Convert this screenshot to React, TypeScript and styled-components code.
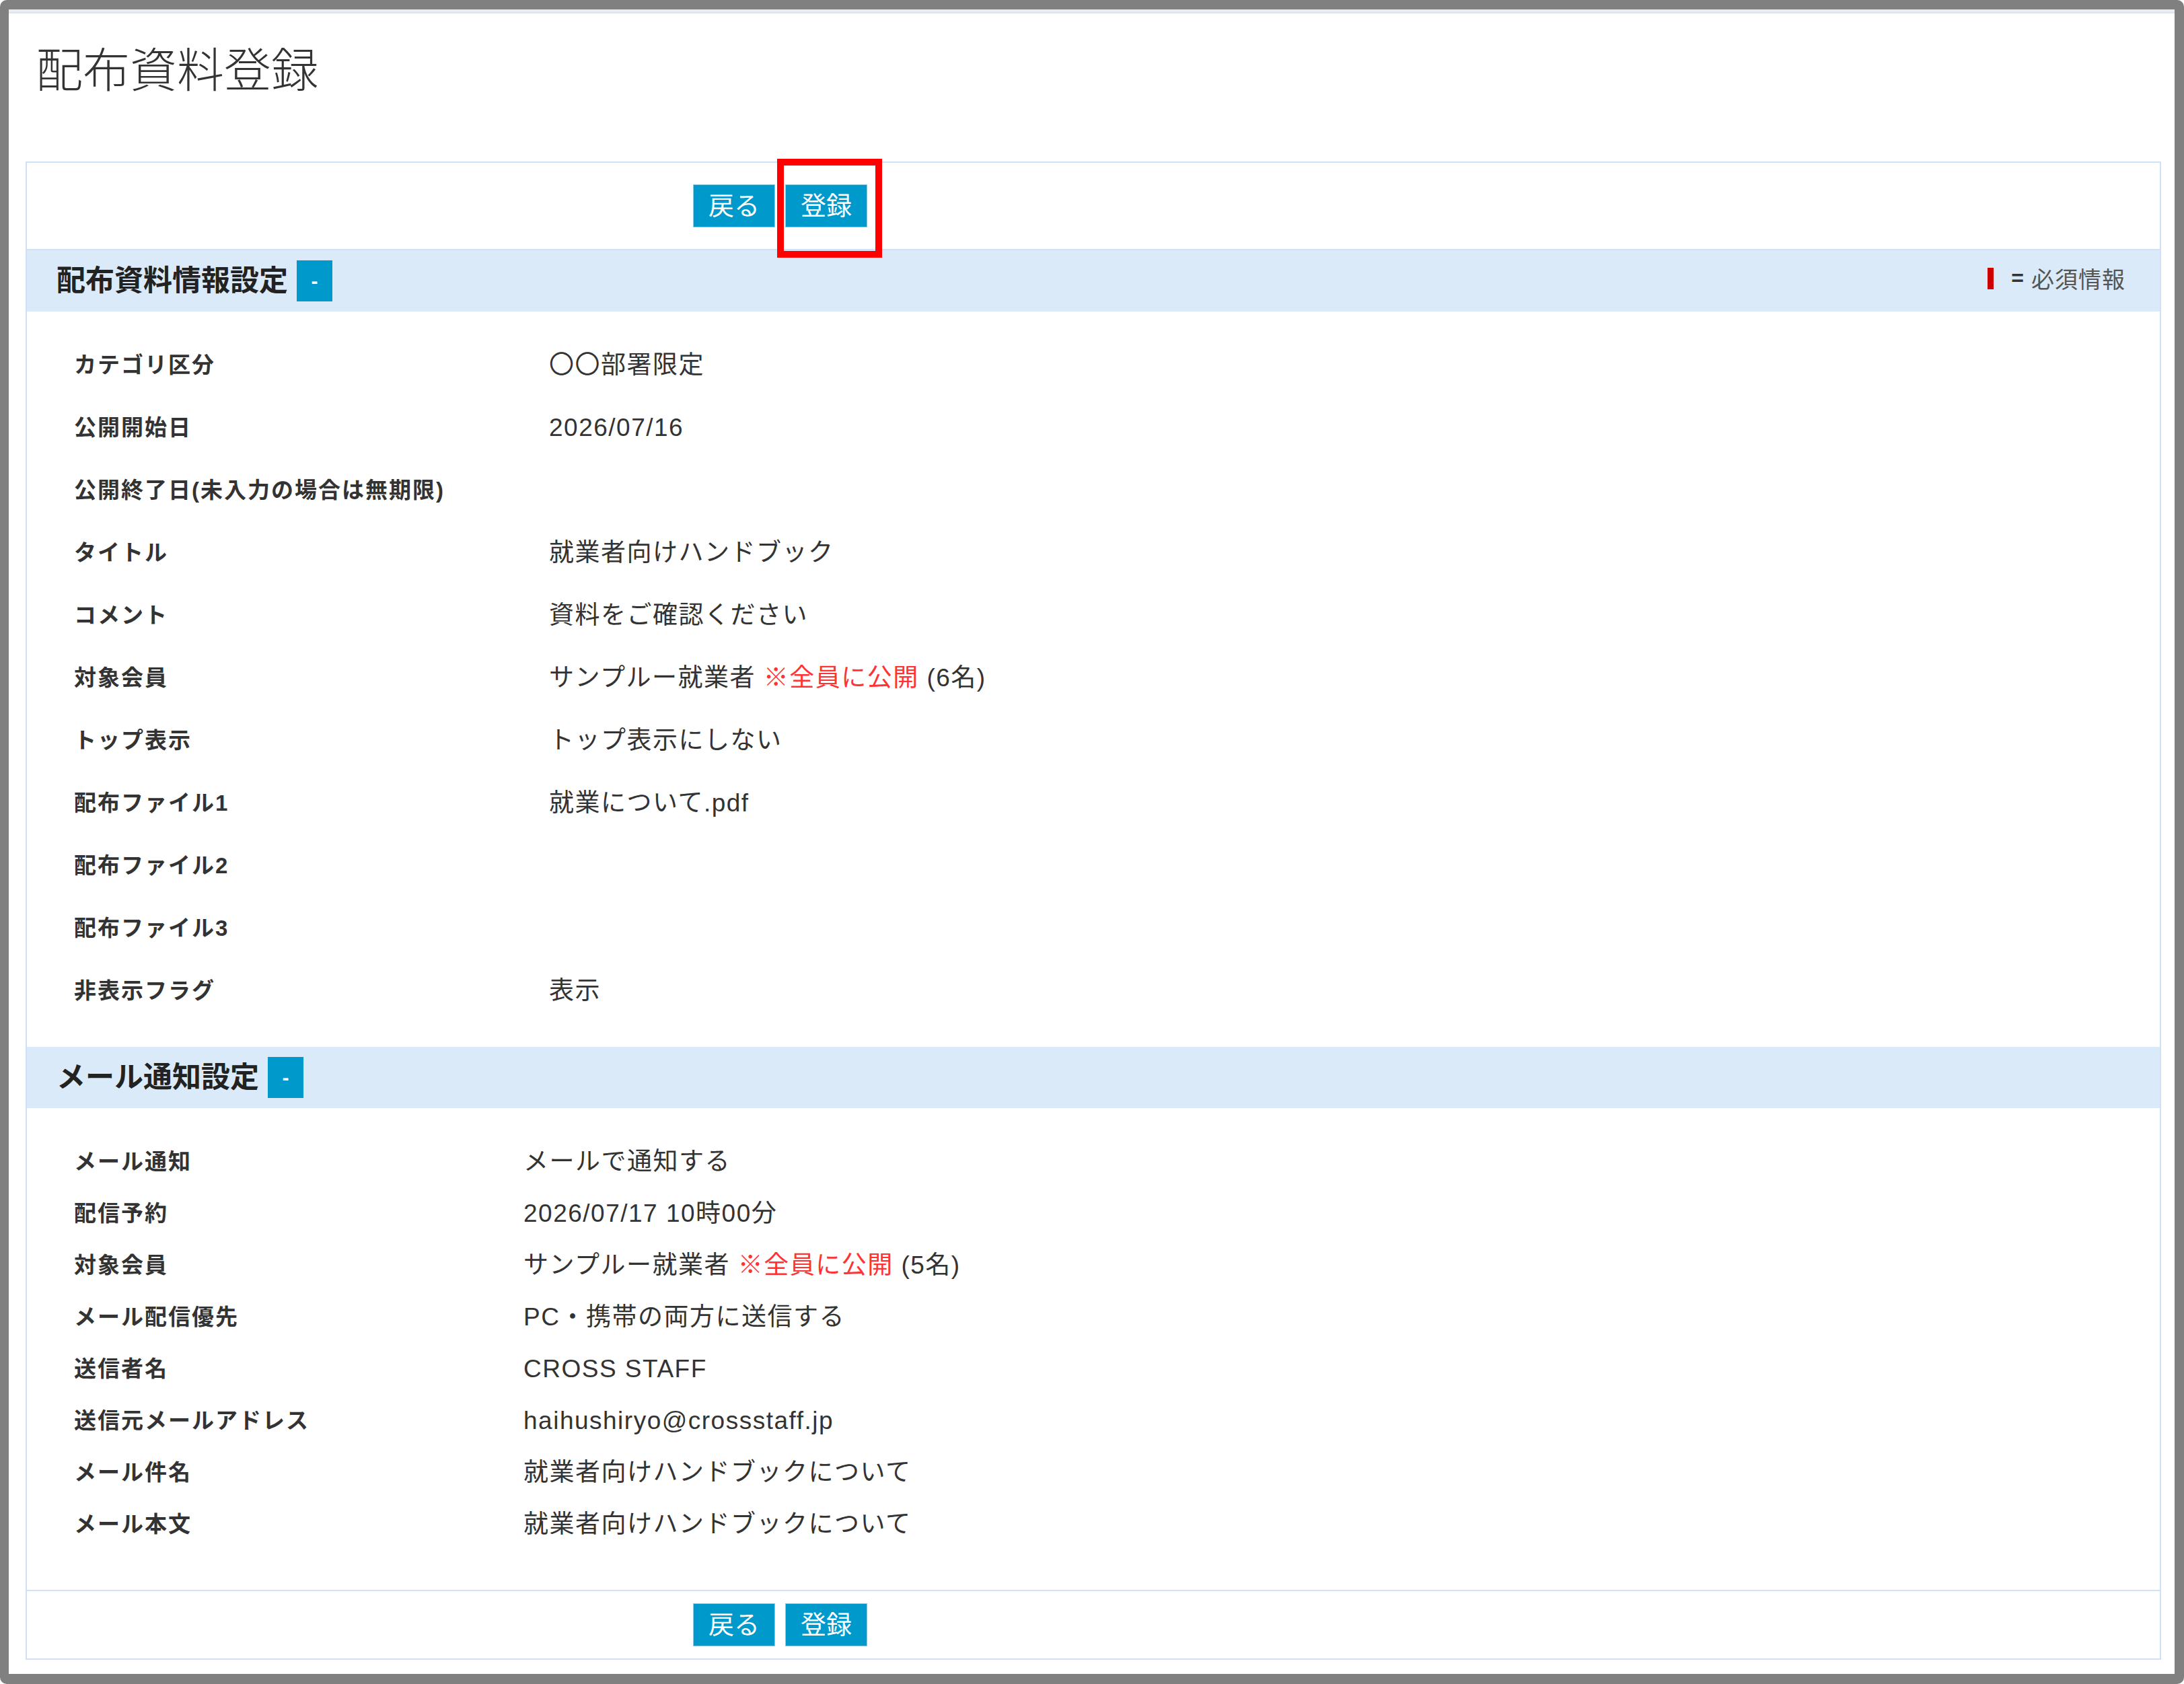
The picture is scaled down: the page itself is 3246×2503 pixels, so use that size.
import React from 'react'
import styled, { createGlobalStyle } from 'styled-components'

const GlobalStyle = createGlobalStyle`
  html, body {
    margin: 0;
    padding: 0;
    background: #ffffff;
  }
  body {
    font-family: "Liberation Sans", "Noto Sans CJK JP", sans-serif;
    color: #333333;
  }
`

const Frame = styled.div`
  box-sizing: border-box;
  width: 3246px;
  height: 2503px;
  border-style: solid;
  border-color: #808080;
  border-width: 14px 14px 15px 13px;
  border-radius: 10px;
  background: #ffffff;
  display: flex;
  flex-direction: column;
`

const TopStrip = styled.div`
  height: 4px;
  background: #ececec;
  border-bottom: 2px solid #d6e6f7;
`

const PageTitle = styled.h1`
  margin: 44px 0 0 40px;
  font-size: 70px;
  line-height: 84px;
  font-weight: 300;
  color: #333333;
`

const Panel = styled.div`
  margin: 92px 20px 0 25px;
  border: 2px solid #cfe1f6;
  display: flex;
  flex-direction: column;
`

const ButtonBar = styled.div<{ $bottom?: boolean }>`
  display: flex;
  gap: 15px;
  padding: ${({ $bottom }) => ($bottom ? '18px 0 18px 990px' : '32px 0 32px 990px')};
  border-bottom: ${({ $bottom }) => ($bottom ? 'none' : '2px solid #cfe1f6')};
  border-top: ${({ $bottom }) => ($bottom ? '2px solid #cfe1f6' : 'none')};
`

const Button = styled.button`
  box-sizing: border-box;
  width: 122px;
  height: 64px;
  padding: 0;
  background: #0099cc;
  color: #ffffff;
  border: 1px solid #8fcbe6;
  font-family: inherit;
  font-size: 38px;
  line-height: 1;
  cursor: pointer;
`

const Highlighted = styled.span`
  position: relative;
  display: inline-flex;
`

const HighlightBox = styled.span`
  position: absolute;
  top: -38px;
  left: -12px;
  right: -22px;
  bottom: -45px;
  border: 10px solid #ff0000;
  pointer-events: none;
`

const SectionHeader = styled.div`
  display: flex;
  align-items: center;
  justify-content: space-between;
  height: 91px;
  padding: 0 51px 0 44px;
  background: #dbeaf8;
`

const HeaderLeft = styled.div`
  display: flex;
  align-items: center;
`

const SectionTitle = styled.h2`
  margin: 0;
  font-size: 43px;
  line-height: 1;
  font-weight: 700;
  color: #222222;
`

const Toggle = styled.button`
  width: 53px;
  height: 61px;
  margin-left: 13px;
  padding: 0;
  background: #0099cc;
  color: #ffffff;
  border: none;
  font-family: inherit;
  font-size: 30px;
  font-weight: 700;
  line-height: 1;
  cursor: pointer;
`

const Required = styled.div`
  display: flex;
  align-items: center;
  margin-bottom: 8px;
  color: #555555;
  font-size: 34px;
  letter-spacing: 1px;
`

const RequiredMark = styled.span`
  width: 9px;
  height: 32px;
  background: #cc0000;
`

const Equals = styled.span`
  margin: 0 10px 0 26px;
  font-weight: 700;
  color: #333333;
  font-size: 32px;
`

const SectionBody = styled.div<{ $compact?: boolean }>`
  padding: ${({ $compact }) => ($compact ? '41px 0 59px 70px' : '33px 0 37px 70px')};
`

const Row = styled.div<{ $labelWidth: number; $compact?: boolean }>`
  display: grid;
  grid-template-columns: ${({ $labelWidth }) => $labelWidth}px 1fr;
  padding: ${({ $compact }) => ($compact ? '13px 0' : '21px 0')};
  line-height: 51px;
`

const Label = styled.div`
  font-size: 33px;
  letter-spacing: 2px;
  font-weight: 700;
  color: #333333;
`

const Value = styled.div`
  font-size: 37px;
  letter-spacing: 1.5px;
  color: #333333;
`

const Notice = styled.span`
  color: #ff3333;
`

type Field = { label: string; value: React.ReactNode }

const target = (count: number) => (
  <>
    サンプルー就業者 <Notice>※全員に公開</Notice> ({count}名)
  </>
)

const materialFields: Field[] = [
  { label: 'カテゴリ区分', value: '〇〇部署限定' },
  { label: '公開開始日', value: '2026/07/16' },
  { label: '公開終了日(未入力の場合は無期限)', value: '' },
  { label: 'タイトル', value: '就業者向けハンドブック' },
  { label: 'コメント', value: '資料をご確認ください' },
  { label: '対象会員', value: target(6) },
  { label: 'トップ表示', value: 'トップ表示にしない' },
  { label: '配布ファイル1', value: '就業について.pdf' },
  { label: '配布ファイル2', value: '' },
  { label: '配布ファイル3', value: '' },
  { label: '非表示フラグ', value: '表示' },
]

const mailFields: Field[] = [
  { label: 'メール通知', value: 'メールで通知する' },
  { label: '配信予約', value: '2026/07/17 10時00分' },
  { label: '対象会員', value: target(5) },
  { label: 'メール配信優先', value: 'PC・携帯の両方に送信する' },
  { label: '送信者名', value: 'CROSS STAFF' },
  { label: '送信元メールアドレス', value: 'haihushiryo@crossstaff.jp' },
  { label: 'メール件名', value: '就業者向けハンドブックについて' },
  { label: 'メール本文', value: '就業者向けハンドブックについて' },
]

function Actions({ bottom, highlight }: { bottom?: boolean; highlight?: boolean }) {
  return (
    <ButtonBar $bottom={bottom}>
      <Button>戻る</Button>
      {highlight ? (
        <Highlighted>
          <Button>登録</Button>
          <HighlightBox />
        </Highlighted>
      ) : (
        <Button>登録</Button>
      )}
    </ButtonBar>
  )
}

export default function App() {
  return (
    <>
      <GlobalStyle />
      <Frame>
        <TopStrip />
        <PageTitle>配布資料登録</PageTitle>
        <Panel>
          <Actions highlight />

          <SectionHeader>
            <HeaderLeft>
              <SectionTitle>配布資料情報設定</SectionTitle>
              <Toggle>-</Toggle>
            </HeaderLeft>
            <Required>
              <RequiredMark />
              <Equals>=</Equals>
              必須情報
            </Required>
          </SectionHeader>
          <SectionBody>
            {materialFields.map((f) => (
              <Row key={f.label} $labelWidth={706}>
                <Label>{f.label}</Label>
                <Value>{f.value}</Value>
              </Row>
            ))}
          </SectionBody>

          <SectionHeader>
            <HeaderLeft>
              <SectionTitle>メール通知設定</SectionTitle>
              <Toggle>-</Toggle>
            </HeaderLeft>
          </SectionHeader>
          <SectionBody $compact>
            {mailFields.map((f) => (
              <Row key={f.label} $labelWidth={668} $compact>
                <Label>{f.label}</Label>
                <Value>{f.value}</Value>
              </Row>
            ))}
          </SectionBody>

          <Actions bottom />
        </Panel>
      </Frame>
    </>
  )
}
